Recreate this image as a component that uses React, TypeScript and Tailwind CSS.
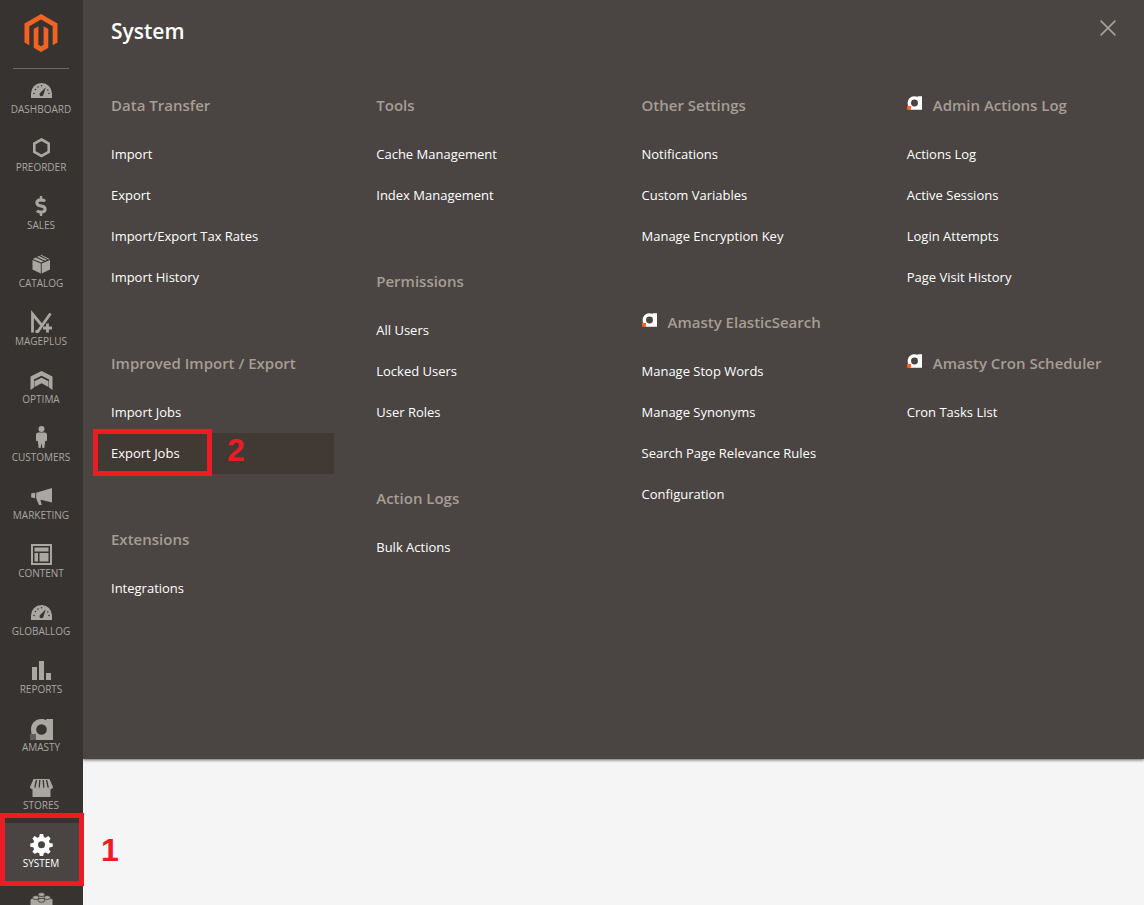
import type { ReactNode } from 'react';
import clsx from 'clsx';
import { FaDollarSign } from 'react-icons/fa';

const Gauge = () => (
  <>
    <path fill="currentColor" d="M1 20v-4.500a10.500 10.500 0 0 1 21 0V20z" />
    <g className="fill-[#373330]">
      <circle cx="4" cy="15.500" r=".8" />
      <circle cx="5.500" cy="11.500" r=".8" />
      <circle cx="8" cy="9" r=".8" />
      <circle cx="11.500" cy="7.700" r=".8" />
      <circle cx="19" cy="15.500" r=".8" />
      <circle cx="17.800" cy="12" r=".8" />
      <path d="M15.800 9.300l-2.300 7.200a2 2 0 1 1-3.200-1.800z" />
    </g>
  </>
);

const AmastyMark = ({ corner }: { corner: string }) => (
  <>
    <path
      fill="currentColor"
      fillRule="evenodd"
      d="M11 3c2.200 0 4 .5 5.300 1.400V3H23v21H4.500C2.500 22 1 18 1 13.500C1 7.500 5.500 3 11 3zM11.500 8.200a5.300 5.300 0 1 0 0 10.600A5.300 5.300 0 0 0 11.500 8.200z"
    />
    <path className={corner} d="M0 18h6v6H0z" />
  </>
);

const icons: Record<string, ReactNode> = {
  Dashboard: <Gauge />,
  Preorder: (
    <path fill="none" stroke="currentColor" strokeWidth="2.600" d="M11.500 3.500l7.200 4v8.500l-7.200 4-7.200-4V7.500z" />
  ),
  Catalog: (
    <g fill="currentColor">
      <path d="M2.500 8l8.300 3.600V21.500L2.500 17.400zM20 8l-8.300 3.600V21.500l8.300-4.100z" />
      <path d="M2.800 6.900L5.600 5.600l8.200 3.700-2.600 1.200zM7 4.900l1.900-.9 8.100 3.800-1.900.9zM10.200 3.300l1-.6 8.400 4.200-1.300.6z" />
    </g>
  ),
  Mageplus: (
    <g fill="none" stroke="currentColor">
      <path d="M2.500 22.500V4l9 11" strokeWidth="2.800" />
      <path d="M5.500 21.500h2.300L20.500 3.500" strokeWidth="2.800" />
      <path d="M17.500 13.500v9M13 18h9" strokeWidth="2.800" />
    </g>
  ),
  Optima: (
    <g fill="currentColor">
      <path d="M11.500 3L22.500 8.500V22L19 19.500V11.500L11.500 7.700L4 11.500V19.500L.5 22V8.500z" />
      <path d="M11.500 9.500L18.500 13V19L11.500 15.200L4.500 19V13z" />
      <path className="stroke-[#373330]" fill="none" d="M4 12.500L11.500 8.800L19 12.500" strokeWidth="1.300" />
    </g>
  ),
  Customers: (
    <g fill="currentColor">
      <circle cx="11.500" cy="3" r="3" />
      <path d="M8.300 6.500h6.400c1.400 0 2.200 1 2.300 2.300V14c0 1.300-1.400 1.300-1.700.5L14.300 22h-1.900l-.9-5-.9 5H8.700l-1-7.500C7.400 15.300 6 15.300 6 14V8.800c0-1.300.9-2.300 2.300-2.300z" />
    </g>
  ),
  Marketing: (
    <path
      fill="currentColor"
      d="M22 4v14.500L11 15.800l-.5.8 1.300 4.400H9L6.200 14.500V8.800zM1.200 9.300l4-.5v5.400l-4-.6z"
    />
  ),
  Content: (
    <>
      <path fill="none" stroke="currentColor" strokeWidth="2" d="M2 3h19v19H2z" />
      <path fill="currentColor" d="M4.500 5.500h14v4h-14zM4.500 11h3.500v8.500H4.500zM9.500 11h9v8.500h-9z" />
    </>
  ),
  Globallog: <Gauge />,
  Reports: <path fill="currentColor" d="M2 9h5v13H2zM9 3h5v19H9zM16 15h5v7h-5z" />,
  Amasty: <AmastyMark corner="fill-[#5f5e5c]" />,
  Stores: (
    <g fill="currentColor">
      <path d="M2.500 14.500h18V23h-18z" />
      <path d="M3.500 5h16l3.500 8c0 2-3 3-4.500 1.500-1.500 1.500-3.500 1.500-4.700 0-1.200 1.500-3.400 1.500-4.600 0-1.200 1.500-3.200 1.500-4.700 0C3 16 0 15 0 13z" />
      <path
        className="stroke-[#373330]"
        fill="none"
        strokeWidth="1.300"
        d="M6.500 6L4.800 13.500M9.800 6L9.200 13.500M13.200 6l.6 7.500M16.500 6l1.700 7.500"
      />
    </g>
  ),
  System: (
    <path
      fill="currentColor"
      fillRule="evenodd"
      d="M9.800 2h3.400l.6 3 1.900.8 2.600-1.700 2.300 2.300-1.700 2.600.8 1.900 3 .6v3.200l-3 .6-.8 1.900 1.700 2.600-2.300 2.300-2.600-1.700-1.900.8-.6 2.800H9.800l-.6-2.800-1.900-.8-2.600 1.700-2.300-2.300 1.700-2.600-.8-1.900-3-.6v-3.200l3-.6.8-1.900-1.700-2.600 2.300-2.300 2.600 1.700 1.900-.8zM11.500 9.200a3.500 3.500 0 1 0 0 7 3.500 3.500 0 0 0 0-7z"
    />
  ),
  Partners: (
    <g fill="currentColor">
      <path d="M11.500 4L22.500 9.500V19L11.500 24L.5 19V9.500z" />
      <g className="stroke-[#373330]" strokeWidth=".8">
        <ellipse cx="11.500" cy="4.500" rx="3.400" ry="2" />
        <ellipse cx="5.800" cy="7.500" rx="3.200" ry="2" />
        <ellipse cx="17.200" cy="7.500" rx="3.200" ry="2" />
        <ellipse cx="11.500" cy="10.300" rx="3.400" ry="2" />
      </g>
    </g>
  ),
};

const menu = [
  'Dashboard', 'Preorder', 'Sales', 'Catalog', 'Mageplus', 'Optima', 'Customers', 'Marketing',
  'Content', 'Globallog', 'Reports', 'Amasty', 'Stores', 'System',
];

type Group = { title: string; amasty?: boolean; links: string[] };

const columns: Group[][] = [
  [
    { title: 'Data Transfer', links: ['Import', 'Export', 'Import/Export Tax Rates', 'Import History'] },
    { title: 'Improved Import / Export', links: ['Import Jobs', 'Export Jobs'] },
    { title: 'Extensions', links: ['Integrations'] },
  ],
  [
    { title: 'Tools', links: ['Cache Management', 'Index Management'] },
    { title: 'Permissions', links: ['All Users', 'Locked Users', 'User Roles'] },
    { title: 'Action Logs', links: ['Bulk Actions'] },
  ],
  [
    { title: 'Other Settings', links: ['Notifications', 'Custom Variables', 'Manage Encryption Key'] },
    {
      title: 'Amasty ElasticSearch',
      amasty: true,
      links: ['Manage Stop Words', 'Manage Synonyms', 'Search Page Relevance Rules', 'Configuration'],
    },
  ],
  [
    {
      title: 'Admin Actions Log',
      amasty: true,
      links: ['Actions Log', 'Active Sessions', 'Login Attempts', 'Page Visit History'],
    },
    { title: 'Amasty Cron Scheduler', amasty: true, links: ['Cron Tasks List'] },
  ],
];

const Sidebar = () => (
  <nav className="relative z-10 w-[83px] shrink-0 bg-[#373330]">
    <a href="#" aria-label="Magento" className="ml-[13px] flex h-[69px] w-14 justify-center border-b border-[#736963] pt-[14px]">
      <svg className="h-[38px] w-[34px]" viewBox="0 0 34 38">
        <path
          className="fill-[#f26322]"
          d="M17 0l16.500 9.500v19L28.700 31.300V12.300L17 5.500 5.300 12.300v19L.5 28.500v-19zM9.700 15l4.700-2.800v18.500l2.600 1.500 2.600-1.500V12.200L24.300 15v18.700L17 38l-7.300-4.300z"
        />
      </svg>
    </a>
    <ul>
      {menu.map((name) => {
        const active = name === 'System';
        return (
          <li key={name} className="relative">
            <a
              href="#"
              className={clsx(
                'flex h-[58px] flex-col items-center pt-[9px] pr-px text-[10px] leading-[14px] uppercase',
                active ? 'bg-[#4a4542] text-white' : 'text-[#aaa6a0]',
              )}
            >
              {name === 'Sales' ? (
                <FaDollarSign className="h-6 w-5 py-[2px]" />
              ) : (
                <svg className="h-6 w-[23px]" viewBox="0 0 23 24">
                  {icons[name]}
                </svg>
              )}
              {name}
            </a>
            {active && (
              <>
                <div className="pointer-events-none absolute -top-[10px] left-0 h-[73px] w-[84px] border-[5px] border-[#ed1c24]" />
                <span className="absolute top-[7px] left-[101px] font-['Liberation_Sans',sans-serif] text-[32px] leading-10 font-bold text-[#ed1c24]">
                  1
                </span>
              </>
            )}
          </li>
        );
      })}
      <li>
        <a href="#" aria-label="Partners" className="flex justify-center pt-[9px] pr-px text-[#aaa6a0]">
          <svg className="h-6 w-[23px]" viewBox="0 0 23 24">
            {icons.Partners}
          </svg>
        </a>
      </li>
    </ul>
  </nav>
);

const MenuGroup = ({ title, amasty, links }: Group) => (
  <section>
    <h2 className="mb-[18px] flex items-start gap-[11px] px-[14px] text-[15px] leading-[21px] font-semibold whitespace-nowrap text-[#a79d95]">
      {amasty && (
        <svg className="mt-px h-[14px] w-[15px] shrink-0 text-white" viewBox="0 3 23 21">
          <AmastyMark corner="fill-[#ff5f1a]" />
        </svg>
      )}
      {title}
    </h2>
    <ul>
      {links.map((link) => {
        const marked = link === 'Export Jobs';
        return (
          <li key={link} className="relative">
            <a
              href="#"
              className={clsx(
                'block px-[14px] text-[13px] leading-[41px] font-medium text-white',
                marked && 'bg-[#403934]',
              )}
            >
              {link}
            </a>
            {marked && (
              <>
                <div className="pointer-events-none absolute -top-1 -left-1 h-[47px] w-[119px] border-[5px] border-[#ed1c24]" />
                <span className="absolute -top-[3px] left-[130px] font-['Liberation_Sans',sans-serif] text-[32px] leading-10 font-bold text-[#ed1c24]">
                  2
                </span>
              </>
            )}
          </li>
        );
      })}
    </ul>
  </section>
);

const App = () => {
  return (
    <div className="flex h-screen overflow-hidden bg-[#f5f5f5] font-['Open_Sans',sans-serif]">
      <Sidebar />
      <main className="min-w-0 flex-1">
        <div className="min-h-[759px] bg-[#4a4542] pt-4 shadow-[0_1px_3px_rgba(0,0,0,0.6)]">
          <header className="mb-[49px] flex h-[30px] items-start justify-between px-7">
            <h1 className="text-[21px] leading-[30px] font-semibold text-white">System</h1>
            <button type="button" aria-label="Close" className="mt-1 text-[#aaa49c]">
              <svg className="h-4 w-4" viewBox="0 0 16 16" fill="none" stroke="currentColor" strokeWidth="1.500">
                <path d="M.6.6l14.800 14.800M15.400.6L.6 15.400" />
              </svg>
            </button>
          </header>
          <div className="grid grid-cols-4">
            {columns.map((groups) => (
              <div key={groups[0].title} className="flex flex-col gap-[55px] px-[14px]">
                {groups.map((group) => (
                  <MenuGroup key={group.title} {...group} />
                ))}
              </div>
            ))}
          </div>
        </div>
      </main>
    </div>
  );
};

export default App;
